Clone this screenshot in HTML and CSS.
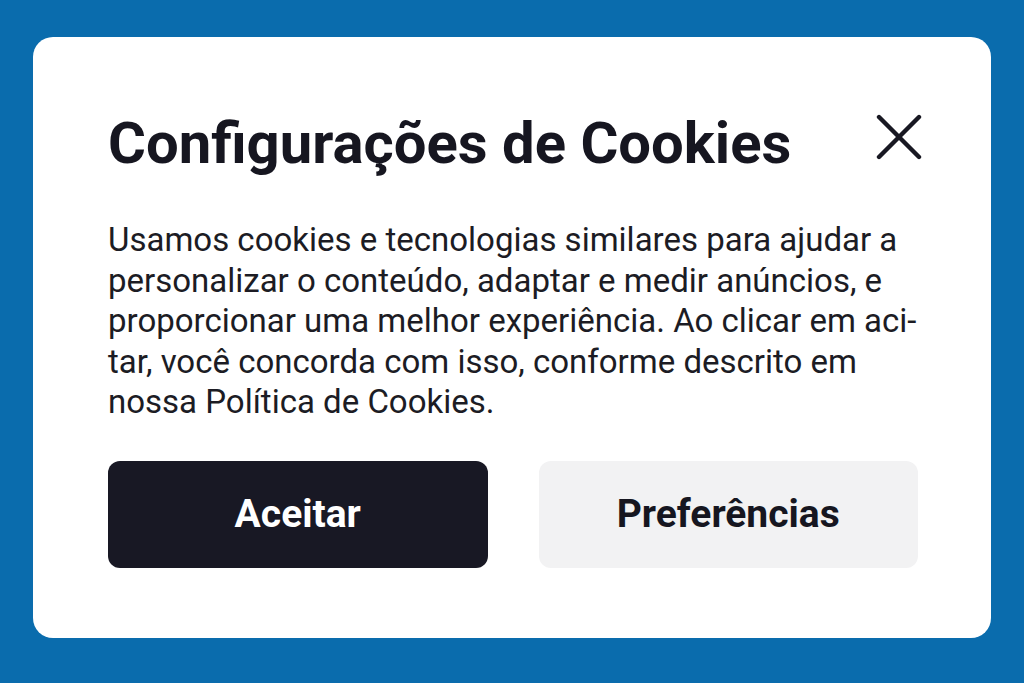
FILE: index.html
```html
<!DOCTYPE html>
<html lang="pt-BR">
<head>
    <meta charset="UTF-8">
    <meta name="viewport" content="width=device-width, initial-scale=1.0">
    <title>Configurações de Cookies</title>
    <link rel="stylesheet" href="styles.css">
</head>
<body>
    <div class="cookie-modal">
        <div class="modal-header">
            <h1>Configurações de Cookies</h1>
            <button class="close-btn" aria-label="Fechar">
                <svg width="46" height="46" viewBox="0 0 46 46" fill="none" stroke="currentColor" stroke-width="4.4" stroke-linecap="round">
                    <line x1="3" y1="3" x2="43" y2="43" />
                    <line x1="43" y1="3" x2="3" y2="43" />
                </svg>
            </button>
        </div>
        <p class="modal-text">Usamos cookies e tecnologias similares para ajudar a<br>
            personalizar o conteúdo, adaptar e medir anúncios, e<br>
            proporcionar uma melhor experiência. Ao clicar em aci-<br>
            tar, você concorda com isso, conforme descrito em<br>
            nossa Política de Cookies.</p>
        <div class="modal-actions">
            <button class="btn btn-accept">Aceitar</button>
            <button class="btn btn-prefs">Preferências</button>
        </div>
    </div>
</body>
</html>
```

FILE: styles.css
```css
body {
    font-family: 'Roboto', 'Liberation Sans', sans-serif;
    margin: 0;
    padding: 37px 33px 0;
    background: #0a6cad;
    height: 683px;
    box-sizing: border-box;
    color: #171722;
}

.cookie-modal {
    background: #ffffff;
    border-radius: 20px;
    width: 958px;
    height: 601px;
    box-sizing: border-box;
    padding: 70px 73px 0 75px;
}

.modal-header {
    display: flex;
    justify-content: space-between;
    align-items: center;
}

h1 {
    margin: 0;
    font-size: 58px;
    font-weight: 700;
    line-height: 72px;
    color: #161620;
}

.close-btn {
    background: none;
    border: none;
    padding: 0;
    margin: 0 -4px 12px 0;
    color: #181822;
    cursor: pointer;
    display: flex;
}

.modal-text {
    margin: 41px 0 0;
    font-size: 33px;
    line-height: 40.5px;
    color: #1c1c24;
}

.modal-actions {
    display: flex;
    gap: 51px;
    margin-top: 38px;
}

.btn {
    flex: 1;
    height: 107px;
    border: none;
    border-radius: 12px;
    font-family: inherit;
    font-size: 39px;
    font-weight: 700;
    cursor: pointer;
}

.btn-accept {
    background: #181824;
    color: #ffffff;
}

.btn-prefs {
    background: #f2f2f3;
    color: #161620;
}
```
